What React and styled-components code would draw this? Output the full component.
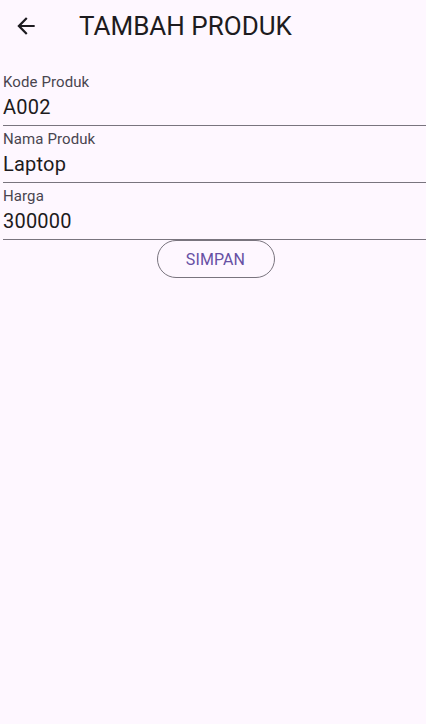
import React from "react";
import styled, { createGlobalStyle } from "styled-components";

const GlobalStyle = createGlobalStyle`
  html, body {
    margin: 0;
    padding: 0;
    background: #fef7ff;
    font-family: Roboto, "Liberation Sans", sans-serif;
  }
`;

const Page = styled.div`
  min-height: 724px;
  background: #fef7ff;
  color: #1d1b20;
`;

const AppBar = styled.header`
  display: flex;
  align-items: center;
  height: 52px;
`;

const BackButton = styled.button`
  display: flex;
  align-items: center;
  justify-content: center;
  width: 48px;
  height: 48px;
  margin-left: 2px;
  padding: 0;
  border: none;
  background: none;
  color: #1d1b20;
  cursor: pointer;
`;

const Title = styled.h1`
  margin: 0 0 0 29px;
  font-size: 26px;
  font-weight: 400;
  line-height: 32px;
  color: #1d1b20;
`;

const Form = styled.form`
  display: flex;
  flex-direction: column;
  padding: 17px 0 0 3px;
`;

const Field = styled.label`
  display: flex;
  flex-direction: column;
  height: 57px;
  box-sizing: border-box;
  padding-top: 4px;
  border-bottom: 1px solid #79747e;
`;

const Label = styled.span`
  font-size: 15px;
  line-height: 18px;
  color: #49454f;
  letter-spacing: 0.1px;
`;

const Value = styled.input`
  margin-top: 4px;
  padding: 0;
  border: none;
  background: none;
  font-family: inherit;
  font-size: 20px;
  line-height: 24px;
  height: 24px;
  color: #1d1b20;
  letter-spacing: 0.2px;
  &:focus {
    outline: none;
  }
`;

const Actions = styled.div`
  display: flex;
  justify-content: center;
  padding-left: 2px;
`;

const OutlineButton = styled.button`
  width: 118px;
  height: 38px;
  border: 1px solid #79747e;
  border-radius: 19px;
  background: none;
  font-family: inherit;
  font-size: 16px;
  color: #6750a4;
  letter-spacing: 0.1px;
  cursor: pointer;
`;

const fields = [
  { label: "Kode Produk", value: "A002" },
  { label: "Nama Produk", value: "Laptop" },
  { label: "Harga", value: "300000" },
];

export default function App() {
  return (
    <Page>
      <GlobalStyle />
      <AppBar>
        <BackButton type="button" aria-label="Kembali">
          <svg width="26" height="26" viewBox="0 0 24 24" fill="currentColor">
            <path d="M20 11H7.83l5.59-5.59L12 4l-8 8 8 8 1.41-1.41L7.83 13H20v-2z" />
          </svg>
        </BackButton>
        <Title>TAMBAH PRODUK</Title>
      </AppBar>
      <Form onSubmit={(e) => e.preventDefault()}>
        {fields.map((f) => (
          <Field key={f.label}>
            <Label>{f.label}</Label>
            <Value defaultValue={f.value} />
          </Field>
        ))}
        <Actions>
          <OutlineButton type="submit">SIMPAN</OutlineButton>
        </Actions>
      </Form>
    </Page>
  );
}
